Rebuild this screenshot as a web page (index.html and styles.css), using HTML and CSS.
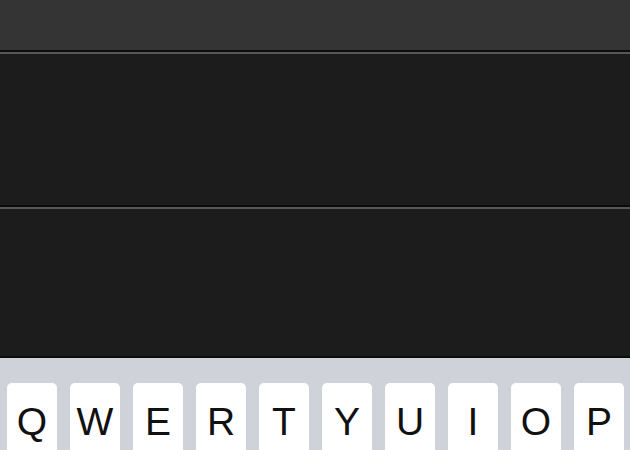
FILE: index.html
```html
<html>
<head>
    <link rel="stylesheet" href="styles.css">
</head>
<body>
    <div class="screen">
        <div class="topbar"></div>
        <div class="panel panel-first"></div>
        <div class="panel panel-second"></div>
        <div class="keyboard">
            <div class="row">
                <div class="key">Q</div>
                <div class="key">W</div>
                <div class="key">E</div>
                <div class="key">R</div>
                <div class="key">T</div>
                <div class="key">Y</div>
                <div class="key">U</div>
                <div class="key">I</div>
                <div class="key">O</div>
                <div class="key">P</div>
            </div>
        </div>
    </div>
</body>
</html>
```

FILE: styles.css
```css
* {
    margin: 0;
    padding: 0;
    box-sizing: border-box;
}
body {
    background-color: #1c1c1c;
    font-family: "Liberation Sans", Arial, sans-serif;
    overflow: hidden;
}
.screen {
    height: 450px;
    display: flex;
    flex-direction: column;
    overflow: hidden;
}
.topbar {
    flex-shrink: 0;
    height: 50px;
    background-color: #343434;
}
.panel {
    flex-shrink: 0;
    background-color: #1c1c1c;
    border-top: 2px solid #0b0b0b;
    box-shadow: inset 0 2px 0 #585858;
}
.panel-first {
    height: 155px;
}
.panel-second {
    height: 151px;
}
.keyboard {
    flex-shrink: 0;
    height: 120px;
    background-color: #cfd2d8;
    border-top: 2px solid #0b0b0b;
    padding: 25px 0 0 7px;
}
.row {
    display: flex;
    gap: 13px;
}
.key {
    width: 50px;
    height: 80px;
    background-color: #ffffff;
    border-radius: 5px;
    text-align: center;
    font-size: 39px;
    line-height: 39px;
    padding-top: 19px;
    color: #111111;
}
```
